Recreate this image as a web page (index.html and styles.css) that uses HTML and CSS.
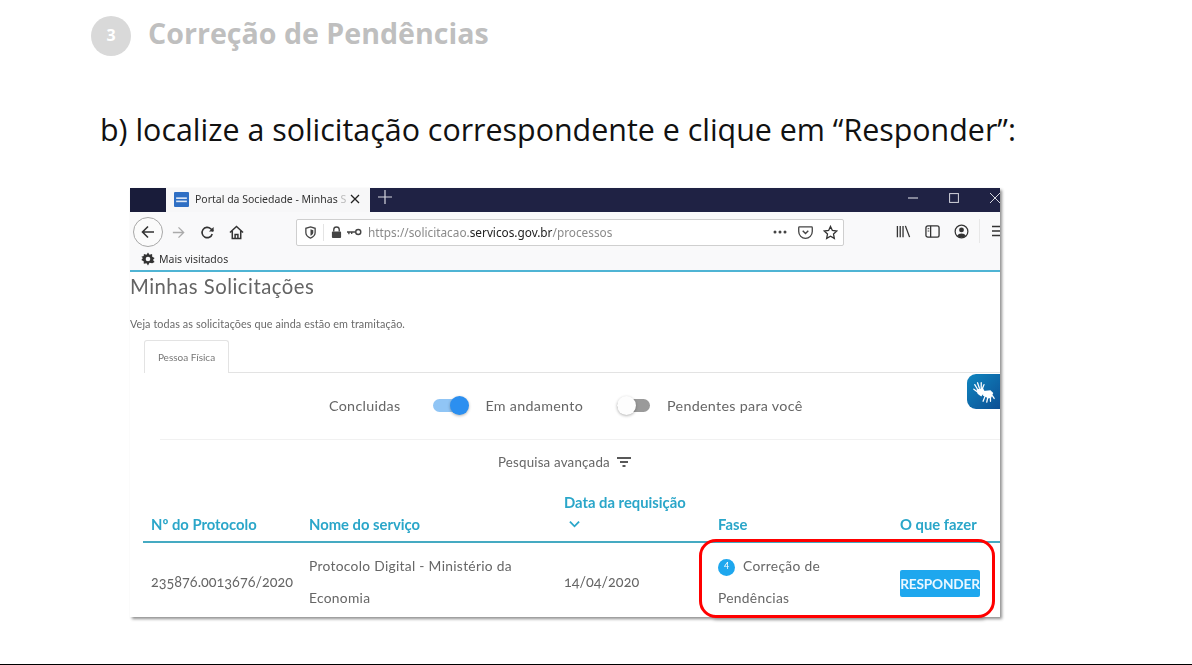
FILE: index.html
```html
<!DOCTYPE html>
<html lang="pt-BR">
<head>
<meta charset="utf-8">
<title>Correção de Pendências</title>
<link rel="stylesheet" href="styles.css">
</head>
<body>
<main class="slide">
  <header class="step">
    <span class="step-num">3</span>
    <h1 class="step-title">Correção de Pendências</h1>
  </header>
  <p class="instruction">b) localize a solicitação correspondente e clique em “Responder”:</p>

  <section class="window">
    <div class="titlebar">
      <div class="tb-left"></div>
      <div class="tab">
        <svg class="favicon" viewBox="0 0 14 14"><rect width="14" height="14" rx="1" fill="#2f6fc4"/><rect x="2" y="5" width="10" height="1.5" fill="#dfe9f7"/><rect x="2" y="8" width="10" height="1.5" fill="#dfe9f7"/></svg>
        <span class="tab-text">Portal da Sociedade - Minhas <span class="tab-fade">S</span></span>
        <svg class="tab-x" viewBox="0 0 10 10"><path d="M1 1l8 8M9 1l-8 8" stroke="#222" stroke-width="1.3" fill="none"/></svg>
      </div>
      <svg class="plus" viewBox="0 0 14 14"><path d="M7 0v14M0 7h14" stroke="#d5d6de" stroke-width="1.2" fill="none"/></svg>
      <div class="win-btns">
        <svg class="wb" viewBox="0 0 10 10"><path d="M0 5h10" stroke="#c9cad4" stroke-width="1.2"/></svg>
        <svg class="wb" viewBox="0 0 10 10"><rect x=".6" y=".6" width="8.8" height="8.8" stroke="#d5d6de" stroke-width="1" fill="none"/></svg>
        <svg class="wb" viewBox="0 0 10 10"><path d="M0 0l10 10M10 0l-10 10" stroke="#d5d6de" stroke-width="1" fill="none"/></svg>
      </div>
    </div>

    <div class="toolbar">
      <div class="nav">
        <span class="back"><svg viewBox="0 0 16 16"><path d="M14 8H2.5M8 2.5L2.5 8 8 13.5" stroke="#333" stroke-width="1.6" fill="none"/></svg></span>
        <svg class="ico fwd" viewBox="0 0 16 16"><path d="M2 8h11.5M8 2.5L13.5 8 8 13.5" stroke="#aaa" stroke-width="1.4" fill="none"/></svg>
        <svg class="ico reload" viewBox="0 0 16 16"><path d="M13 9.500A5.500 5.500 0 1 1 11.500 4L14 6.500" stroke="#333" stroke-width="1.7" fill="none"/><path d="M14.500 2v5h-5z" fill="#333"/></svg>
        <svg class="ico home" viewBox="0 0 16 16"><path d="M1 8l7-6.500L15 8M3.500 6.500V14.500h9V6.500M6.500 14.500V10h3v4.500" stroke="#333" stroke-width="1.6" fill="none"/></svg>
      </div>
      <div class="urlbar">
        <svg class="shield" viewBox="0 0 14 14"><path d="M7 1l5 1.500V7c0 3-2.500 5-5 6-2.500-1-5-3-5-6V2.500z" stroke="#444" stroke-width="1.4" fill="none"/><path d="M7 3.500L10 4.500V7c0 1.500-1.500 3-3 3.500z" fill="#444"/></svg>
        <span class="url-sep"></span>
        <svg class="lock" viewBox="0 0 12 14"><path d="M3 6V4a3 3 0 0 1 6 0v2" stroke="#444" stroke-width="1.500" fill="none"/><rect x="1" y="6" width="10" height="7" rx="1" fill="#444"/></svg>
        <svg class="key" viewBox="0 0 16 8"><circle cx="12" cy="4" r="2.700" stroke="#444" stroke-width="1.500" fill="none"/><path d="M0 4h9M2 4v2.500M5 4v2" stroke="#444" stroke-width="1.400" fill="none"/></svg>
        <span class="url">https://solicitacao.<b class="url-host">servicos.gov.br</b>/processos</span>
        <svg class="url-dots" viewBox="0 0 14 4"><circle cx="2" cy="2" r="1.500" fill="#444"/><circle cx="7" cy="2" r="1.500" fill="#444"/><circle cx="12" cy="2" r="1.500" fill="#444"/></svg>
        <svg class="pocket" viewBox="0 0 16 14"><path d="M1.500 1h13a.8.8 0 0 1 .8.8V6a7.300 7.300 0 0 1-14.600 0V1.800a.8.8 0 0 1 .8-.8z" stroke="#444" stroke-width="1.400" fill="none"/><path d="M5 5l3 3 3-3" stroke="#444" stroke-width="1.500" fill="none"/></svg>
        <svg class="star" viewBox="0 0 16 16"><path d="M8 1.500l2 4.300 4.700.6-3.500 3.200.9 4.700L8 12l-4.100 2.300.9-4.700L1.300 6.400 6 5.800z" stroke="#333" stroke-width="1.400" fill="none"/></svg>
      </div>
      <div class="tools">
        <svg class="ico lib" viewBox="0 0 16 14"><path d="M1.500 1v12M4.500 1v12M7.500 1v12M10 1l4.500 12" stroke="#333" stroke-width="1.400" fill="none"/></svg>
        <svg class="ico side" viewBox="0 0 16 14"><rect x="1" y="1" width="14" height="12" rx="2" stroke="#333" stroke-width="1.400" fill="none"/><path d="M6 1v12" stroke="#333" stroke-width="1.400"/><path d="M2.800 4h1.800M2.800 6.500h1.800" stroke="#333"/></svg>
        <svg class="ico acct" viewBox="0 0 16 16"><circle cx="8" cy="8" r="6.800" stroke="#333" stroke-width="1.300" fill="none"/><circle cx="8" cy="6.300" r="2.600" fill="#333"/><path d="M3.500 12.500a4.700 3.500 0 0 1 9 0 6 6 0 0 1-9 0z" fill="#333"/></svg>
        <span class="tool-sep"></span>
        <svg class="ico burger" viewBox="0 0 14 12"><path d="M0 1.500h14M0 6h14M0 10.500h14" stroke="#333" stroke-width="1.500"/></svg>
      </div>
    </div>

    <div class="bookmarks">
      <svg class="gear" viewBox="0 0 14 14"><path d="M7 .5l1.500 2.200 2.600-.7.100 2.700 2.400 1.300-1.600 2 1.600 2-2.400 1.300-2.700-.6L7 13.500l-1.500-2.300-2.700.6-.1-2.500L.3 8l1.600-2L.3 4.700l2.400-.7.200-2 2.600.7z" fill="#333"/><circle cx="7" cy="7" r="2.300" fill="#f9f9fa"/></svg>
      <span class="bm-text">Mais visitados</span>
    </div>

    <div class="page">
      <h2 class="page-title">Minhas Solicitações</h2>
      <p class="page-sub">Veja todas as solicitações que ainda estão em tramitação.</p>
      <div class="tabs"><span class="page-tab">Pessoa Física</span></div>

      <div class="filters">
        <span class="f-label">Concluidas</span>
        <span class="toggle on"><span class="knob"></span></span>
        <span class="f-label">Em andamento</span>
        <span class="toggle off"><span class="knob"></span></span>
        <span class="f-label">Pendentes para você</span>
      </div>

      <div class="search-row">
        <span class="search-text">Pesquisa avançada</span>
        <svg class="filter-ico" viewBox="0 0 14 10"><path d="M0 1h14M3 5h8M5.500 9h3" stroke="#222" stroke-width="1.700"/></svg>
      </div>

      <div class="table">
        <div class="th">Nº do Protocolo</div>
        <div class="th">Nome do serviço</div>
        <div class="th th-date">Data da requisição
          <svg class="chev" viewBox="0 0 12 8"><path d="M1 1.500l5 5 5-5" stroke="#2aa6c9" stroke-width="2" fill="none"/></svg>
        </div>
        <div class="th">Fase</div>
        <div class="th">O que fazer</div>

        <div class="td td-num">235876.0013676/2020</div>
        <div class="td td-wrap">Protocolo Digital - Ministério da<br>Economia</div>
        <div class="td td-num">14/04/2020</div>
        <div class="td td-wrap"><span class="phase-num">4</span>Correção de<br>Pendências</div>
        <div class="td td-action"><span class="btn">RESPONDER</span></div>
      </div>
    </div>

    <div class="vlibras">
      <svg viewBox="0 0 26 26"><g stroke="#fff" stroke-width="1.400" fill="none" stroke-linecap="round"><path d="M3 5l3 5M6 3l2 6M10 3l0 6M13 5l-2 5M2 10l4 3"/></g><path d="M5 10l7-1 2 4-4 5-4-3z" fill="#fff"/><path d="M12 12l8-1 3 3-2 5-3 1-6-3z" fill="#fff"/><g stroke="#fff" stroke-width="1.400" fill="none" stroke-linecap="round"><path d="M14 18l-2 5M17 19l-1 5M20 19l0 4M22 17l2 3"/></g></svg>
    </div>
    <div class="highlight"></div>
  </section>
</main>
</body>
</html>
```

FILE: styles.css
```css
* { box-sizing: border-box; }
html, body { margin: 0; padding: 0; background: #fff; }
.slide {
  width: 1192px;
  height: 665px;
  padding-top: 16px;
  border-bottom: 1px solid #000;
  overflow: hidden;
  font-family: "Open Sans", "Liberation Sans", sans-serif;
}
.step { display: flex; align-items: center; height: 40px; margin-left: 91px; gap: 17px; }
.step-num {
  width: 40px; height: 40px; border-radius: 50%; padding-bottom: 2px;
  background: #d9d9d9; color: #fff;
  display: flex; align-items: center; justify-content: center;
  font-size: 16px; font-weight: 700;
}
.step-title { margin: 0; padding-bottom: 6px; font-size: 28.600px; font-weight: 700; color: #bfbfbf; line-height: 36px; white-space: nowrap; }
.instruction {
  margin: 54px 0 0 100px; font-size: 30.400px; line-height: 40px; color: #111; white-space: nowrap;
}
.window {
  position: relative;
  width: 870px; height: 429px;
  margin: 38px 0 0 130px;
  background: #fff;
  filter: drop-shadow(2px 2px 1.500px #8f8f8f) blur(.35px);
}
.titlebar { display: flex; align-items: stretch; height: 24px; background: #1f2244; overflow: hidden; }
.tb-left { width: 36px; background: #191c3a; }
.tab {
  width: 204px; background: #f7f7f8; display: flex; align-items: center; padding: 0 0 2px 8px;
  font-family: "Noto Sans", "Liberation Sans", sans-serif; font-size: 10.500px; color: #333;
}
.favicon { width: 15px; height: 15px; margin-right: 6px; flex: none; }
.tab-text { width: 155px; white-space: nowrap; overflow: hidden; }
.tab-fade { color: #bbb; }
.tab-x { width: 10px; height: 10px; flex: none; }
.plus { width: 14px; height: 14px; margin: 2px 0 0 8px; }
.win-btns { margin-left: auto; display: flex; align-items: center; gap: 31px; padding-bottom: 5px; }
.wb { width: 10px; height: 10px; }

.toolbar { display: flex; align-items: center; height: 38px; background: #f9f9fa; overflow: hidden; padding-top: 2px; }
.nav { display: flex; align-items: center; width: 166px; flex: none; padding-left: 3px; }
.back {
  width: 30px; height: 30px; border-radius: 50%; border: 1px solid #a8a8a8; background: #fbfbfb;
  display: flex; align-items: center; justify-content: center;
}
.back svg { width: 16px; height: 16px; }
.ico { width: 15px; height: 15px; flex: none; }
.fwd { margin-left: 8px; }
.reload { margin-left: 14px; }
.home { margin-left: 14px; }
.urlbar {
  flex: none; width: 548px; height: 27px; background: #fff; border: 1px solid #cfcfcf; border-radius: 2px;
  display: flex; align-items: center; padding-left: 7px;
}
.shield { width: 13px; height: 13px; flex: none; }
.url-sep { width: 1px; height: 17px; background: #e4e4e4; margin: 0 7px 0 6px; }
.lock { width: 11px; height: 13px; flex: none; }
.key { width: 15px; height: 8px; margin-left: 5px; flex: none; }
.url { margin-left: 6px; font-family: "Noto Sans", "Liberation Sans", sans-serif; font-size: 11.800px; color: #8a8a8a; white-space: nowrap; }
.url-host { font-weight: 400; color: #222; }
.url-dots { width: 14px; height: 4px; margin-left: auto; flex: none; }
.pocket { width: 15px; height: 13px; margin-left: 11px; flex: none; }
.star { width: 15px; height: 15px; margin: 0 5px 0 10px; flex: none; }
.tools { display: flex; align-items: center; margin-left: 52px; flex: none; padding-bottom: 2px; }
.side { margin-left: 14px; }
.acct { margin-left: 14px; }
.tool-sep { width: 1px; height: 24px; background: #e8e8e8; margin-left: 10px; }
.burger { width: 14px; height: 12px; margin-left: 12px; }

.bookmarks {
  display: flex; align-items: center; height: 20px; padding: 0 0 2px 11px; background: #f9f9fa;
  font-family: "Noto Sans", "Liberation Sans", sans-serif; font-size: 10.500px; color: #333;
}
.gear { width: 14px; height: 14px; margin-right: 4px; }

.page { border-top: 2px solid #4fb4d4; font-family: "Lato", "Open Sans", sans-serif; color: #666; overflow: hidden; }
.page-title { margin: 0; height: 30px; font-size: 20.300px; line-height: 29px; font-weight: 400; color: #646464; letter-spacing: .5px; }
.page-sub { margin: 15px 0 0; height: 14px; font-size: 10.800px; line-height: 14px; color: #6a6a6a; letter-spacing: .1px; white-space: nowrap; }
.tabs { margin: 9px 0 0 14px; height: 33px; border-bottom: 1px solid #e3e3e3; }
.page-tab {
  display: flex; align-items: center; justify-content: center;
  width: 85px; height: 33px; border: 1px solid #e3e3e3; border-bottom: 0; border-radius: 3px 3px 0 0;
  background: #fff; font-size: 10px; color: #777;
}
.filters {
  display: flex; align-items: center; height: 67px; margin-left: 30px; padding: 0 0 2px 169px;
  border-bottom: 1px solid #f1f1f1;
  font-size: 14.300px; letter-spacing: .3px; color: #666;
}
.f-label { white-space: nowrap; }
.toggle { position: relative; height: 13px; border-radius: 7px; flex: none; }
.toggle.on { width: 30px; background: #90c5f5; margin: 0 22px 0 33px; }
.toggle.off { width: 33px; background: #9a9a9a; margin: 0 17px 0 34px; }
.knob {
  position: absolute; top: -3px; width: 19px; height: 19px; border-radius: 50%;
  box-shadow: 0 1px 3px rgba(0,0,0,.3);
}
.toggle.on .knob { right: -6px; background: #2b8ff0; }
.toggle.off .knob { left: 0; background: #fdfdfd; }
.search-row { display: flex; align-items: center; height: 45px; padding: 0 0 2px 368px; font-size: 13.300px; color: #666; letter-spacing: .2px; }
.filter-ico { width: 14px; height: 10px; margin-left: 7px; }
.table {
  display: grid; grid-template-columns: 158px 255px 154px 182px 108px; margin-left: 13px;
  grid-template-rows: 58px 74px;
}
.th {
  padding: 0 0 7px 8px; display: flex; flex-direction: column; justify-content: flex-end;
  border-bottom: 2px solid #45aac2; color: #2aa6c9; font-weight: 700; font-size: 14.800px; line-height: 20px; white-space: nowrap;
}
.chev { width: 11px; height: 8px; margin: 8px 0 6px 5px; display: block; }
.td { padding-left: 8px; display: flex; align-items: center; font-size: 13.800px; color: #666; letter-spacing: .3px; white-space: nowrap; }
.td-num { padding-top: 2px; font-size: 14.400px; font-feature-settings: "onum"; letter-spacing: 0; }
.td-action { padding-top: 2px; }
.td-wrap { display: block; line-height: 32px; padding-top: 7px; }
.phase-num {
  display: inline-flex; align-items: center; justify-content: center; vertical-align: 2px;
  width: 17px; height: 17px; border-radius: 50%; background: #1ea7ee; color: #fff; font-size: 9px; margin-right: 8px; line-height: 12px; padding-bottom: 3px; letter-spacing: 0;
}
.btn {
  display: flex; align-items: center; justify-content: center; width: 80px; height: 27px; margin-top: 4px;
  border-radius: 2px; background: #1ea7ee; color: #eaf7ff; font-weight: 700; font-size: 13.700px; letter-spacing: -.2px;
}
.vlibras {
  position: absolute; top: 186px; right: 0; width: 33px; height: 35px; border-radius: 9px 0 0 9px;
  background: linear-gradient(135deg, #0f86c0, #0d4f94);
  display: flex; align-items: center; justify-content: center;
}
.vlibras svg { width: 24px; height: 24px; }
.highlight {
  position: absolute; left: 569px; top: 351px; width: 296px; height: 79px;
  border: 3px solid #f00; border-radius: 17px;
}
```
